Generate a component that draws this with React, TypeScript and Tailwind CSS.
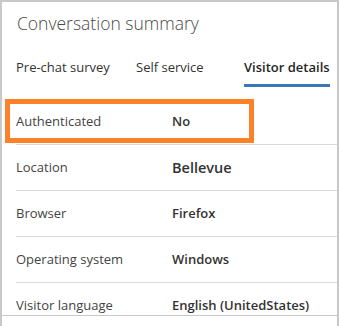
const rows = [
  { label: 'Authenticated', value: 'No', highlight: true },
  { label: 'Location', value: 'Bellevue', big: true },
  { label: 'Browser', value: 'Firefox' },
  { label: 'Operating system', value: 'Windows' },
  { label: 'Visitor language', value: 'English (UnitedStates)' },
]

export default function App() {
  return (
    <div className="h-[326px] w-[340px] bg-white font-['Open_Sans',sans-serif]">
      <div className="flex h-[326px] w-[339px] flex-col border-2 border-b-0 border-[#c8c8c8]">
        {/* Scroll area */}
        <div className="h-[313px] overflow-hidden">
          <div className="flex h-[42px] items-center pl-[15px] text-[17.5px] font-light text-[#4a4a4a]">
            Conversation summary
          </div>

          {/* Tabs */}
          <div className="flex h-[43px] items-end pl-[14px] text-[13px] text-[#333]">
            <div className="w-[120px] pb-[10px]">Pre-chat survey</div>
            <div className="w-[108px] pb-[10px]">Self service</div>
            <div className="border-b-[3px] border-[#3b76b6] pb-[7px] font-semibold text-[#262626]">
              Visitor details
            </div>
          </div>

          <div className="mt-[12px]">
            {rows.map((r) => (
              <div key={r.label} className="relative ml-[14px] flex h-[46px] items-center border-b border-[#dadada] text-[13px]">
                <div className="w-[156px] text-[#444]">{r.label}</div>
                <div className={`font-semibold text-[#333] ${r.big ? 'text-[14.5px]' : ''}`}>{r.value}</div>
                {r.highlight && (
                  <span className="absolute left-[-11px] top-0 h-[44px] w-[249px] border-[5px] border-[#fd8128]" />
                )}
              </div>
            ))}
          </div>
        </div>
        <div className="h-px bg-[#c8c8c8]" />
      </div>
    </div>
  )
}
